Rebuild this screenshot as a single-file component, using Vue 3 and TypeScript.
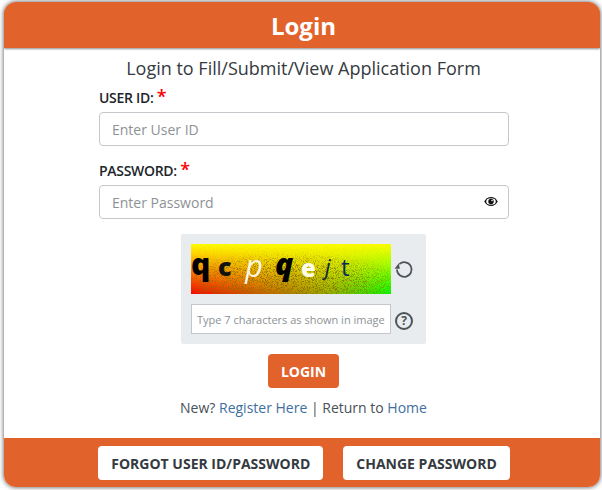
<script setup lang="ts">
const captchaChars = [
  { ch: 'q', cls: 'c1' },
  { ch: 'c', cls: 'c2' },
  { ch: 'p', cls: 'c3' },
  { ch: 'q', cls: 'c4' },
  { ch: 'e', cls: 'c5' },
  { ch: 'j', cls: 'c6' },
  { ch: 't', cls: 'c7' },
]
</script>

<template>
  <div class="page">
    <div class="card">
      <div class="card-head">Login</div>

      <form class="card-body" @submit.prevent>
        <p class="intro">Login to Fill/Submit/View Application Form</p>

        <div class="fields">
          <label class="label">USER ID: <span class="req">*</span></label>
          <input class="control" type="text" placeholder="Enter User ID" />

          <label class="label label-pass">PASSWORD: <span class="req">*</span></label>
          <div class="pass-wrap">
            <input class="control" type="password" placeholder="Enter Password" />
            <svg class="eye" viewBox="0 0 16 12" width="14" height="11">
              <path d="M8 .8C4.6.8 1.8 3 .3 6c1.5 3 4.3 5.200 7.700 5.200S14.200 9 15.700 6C14.200 3 11.400.8 8 .8z" fill="#111" />
              <ellipse cx="8" cy="6" rx="5.400" ry="3.700" fill="#fff" />
              <circle cx="8" cy="6" r="3.100" fill="#111" />
              <circle cx="9.200" cy="4.800" r="0.900" fill="#fff" />
            </svg>
          </div>
        </div>

        <div class="captcha">
          <div class="captcha-row">
            <div class="captcha-img">
              <svg class="noise" width="200" height="50">
                <defs>
                  <filter id="speckle" x="0" y="0" width="100%" height="100%">
                    <feTurbulence type="fractalNoise" baseFrequency="1.1" numOctaves="2" seed="4" />
                    <feColorMatrix type="matrix" values="0 0 0 0 0.250  0 0 0 0 0.150  0 0 0 0 0  3.500 3.500 0 0 -3.400" />
                  </filter>
                  <radialGradient id="centre" cx="0.47" cy="0.8" r="0.65">
                    <stop offset="0" stop-color="#fff" />
                    <stop offset="0.6" stop-color="#bbb" />
                    <stop offset="1" stop-color="#111" />
                  </radialGradient>
                  <mask id="fadeMask">
                    <rect width="200" height="50" fill="url(#centre)" />
                  </mask>
                </defs>
                <g mask="url(#fadeMask)">
                  <rect width="200" height="50" filter="url(#speckle)" />
                </g>
              </svg>
              <span v-for="(c, i) in captchaChars" :key="i" class="glyph" :class="c.cls">{{ c.ch }}</span>
            </div>
            <svg class="side-icon" viewBox="0 0 20 20" width="20" height="20">
              <path d="M5.300 5.200A7.300 7.300 0 1 1 3 10.500" fill="none" stroke="#4d5358" stroke-width="1.700" />
              <path d="M.6 9.800 L5.800 9.800 L4.800 4.200z" fill="#4d5358" />
            </svg>
          </div>
          <div class="captcha-row captcha-row-input">
            <input class="captcha-input" type="text" placeholder="Type 7 characters as shown in image" />
            <span class="help">?</span>
          </div>
        </div>

        <button class="login-btn" type="submit">LOGIN</button>

        <p class="links">New? <a href="#">Register Here</a> | Return to <a href="#">Home</a></p>
      </form>

      <div class="card-foot">
        <button class="foot-btn" type="button">FORGOT USER ID/PASSWORD</button>
        <button class="foot-btn" type="button">CHANGE PASSWORD</button>
      </div>
    </div>
  </div>
</template>

<style>
html,
body {
  margin: 0;
  background: #fff;
}
</style>

<style scoped>
.page {
  width: 602px;
  height: 490px;
  box-sizing: border-box;
  padding: 2px 2px 3px 4px;
  overflow: hidden;
  font-family: "Open Sans", sans-serif;
}

.card {
  height: 100%;
  display: flex;
  flex-direction: column;
  background: #fff;
  border-radius: 12px;
  box-shadow: 0 0 5px rgba(0, 0, 0, 0.7);
  overflow: hidden;
}

.card-head {
  height: 46px;
  flex: none;
  box-sizing: border-box;
  padding-left: 3px;
  display: flex;
  align-items: center;
  justify-content: center;
  background: #e2622c;
  color: #fff;
  font-size: 24px;
  font-weight: 700;
  box-shadow: 0 1px 2px rgba(0, 0, 0, 0.45);
}

.card-body {
  flex: 1;
  display: flex;
  flex-direction: column;
  align-items: center;
  min-height: 0;
}

.intro {
  margin: 8px 0 0 3px;
  font-size: 18px;
  line-height: 24px;
  color: #343a40;
}

.fields {
  width: 410px;
  margin-top: 6px;
  margin-left: 4px;
  display: flex;
  flex-direction: column;
}

.label {
  font-size: 14px;
  font-weight: 600;
  line-height: 24px;
  letter-spacing: -0.3px;
  color: #212529;
  margin-bottom: 2px;
}

.label-pass {
  margin-top: 13px;
}

.req {
  color: #f00;
  font-size: 18px;
  line-height: 14px;
}

.control {
  width: 100%;
  height: 34px;
  box-sizing: border-box;
  display: block;
  padding: 0 12px;
  border: 1px solid #c4c8cc;
  border-radius: 4px;
  font-family: inherit;
  font-size: 14px;
  color: #495057;
  background: #fff;
  outline: none;
}

.control::placeholder,
.captcha-input::placeholder {
  color: #8d9296;
  opacity: 1;
}

.pass-wrap {
  position: relative;
}

.eye {
  position: absolute;
  top: 11px;
  right: 11px;
}

.captcha {
  width: 245px;
  height: 110px;
  box-sizing: border-box;
  margin-top: 15px;
  margin-left: 3px;
  padding: 10px;
  background: #e9ecef;
  border-radius: 2px;
  display: flex;
  flex-direction: column;
  gap: 10px;
}

.captcha-row {
  display: flex;
  align-items: center;
  gap: 3px;
}

.captcha-row-input {
  gap: 4px;
}

.captcha-img {
  position: relative;
  width: 200px;
  height: 50px;
  flex: none;
  overflow: hidden;
  background:
    linear-gradient(to bottom, #ff0 0%, rgba(255, 255, 0, 0.6) 45%, rgba(255, 255, 0, 0) 100%),
    linear-gradient(to right, #f00 0%, #d06000 35%, #90b000 70%, #0f0 100%);
}

.noise {
  position: absolute;
  inset: 0;
}

.glyph {
  position: absolute;
  line-height: 0.8;
  font-family: "Open Sans", sans-serif;
}

.c1 { left: 0; top: 8px; font-size: 30px; font-weight: 800; color: #000; }
.c2 { left: 27px; top: 12px; font-size: 25px; font-weight: 800; color: #111; }
.c3 { left: 54px; top: 9px; font-size: 31px; font-weight: 400; font-style: italic; color: #fff; opacity: 0.9; }
.c4 { left: 84px; top: 8px; font-size: 30px; font-weight: 800; font-style: italic; color: #000; }
.c5 { left: 110px; top: 14px; font-size: 24px; font-weight: 800; color: #fdfde8; }
.c6 { left: 134px; top: 14px; font-size: 22px; font-style: italic; color: #0a2a3a; }
.c7 { left: 150px; top: 13px; font-size: 24px; color: #0b2c5a; }

.side-icon {
  flex: none;
}

.captcha-input {
  width: 200px;
  height: 30px;
  box-sizing: border-box;
  flex: none;
  padding: 0 0 0 5px;
  border: 1px solid #c4c8cc;
  background: #fff;
  font-family: inherit;
  font-size: 11px;
  outline: none;
}

.help {
  width: 14px;
  height: 14px;
  flex: none;
  margin-top: 3px;
  border: 2px solid #4d5358;
  border-radius: 50%;
  display: flex;
  align-items: center;
  justify-content: center;
  font-size: 12px;
  font-weight: 700;
  color: #4d5358;
}

.login-btn {
  width: 71px;
  height: 34px;
  margin-top: 10px;
  margin-left: 3px;
  padding: 0;
  border: 0;
  border-radius: 4px;
  background: #e2622c;
  color: #fff;
  font-family: inherit;
  font-size: 14px;
  font-weight: 700;
}

.links {
  margin: 10px 0 0 3px;
  font-size: 14px;
  line-height: 20px;
  color: #495057;
}

.links a {
  color: #3e6f9e;
  text-decoration: none;
}

.card-foot {
  height: 49px;
  flex: none;
  box-sizing: border-box;
  padding-top: 8px;
  padding-left: 4px;
  display: flex;
  justify-content: center;
  align-items: flex-start;
  gap: 20px;
  background: #e2622c;
}

.foot-btn {
  height: 34px;
  padding: 0 13px;
  border: 0;
  border-radius: 4px;
  background: #fff;
  color: #343a40;
  font-family: inherit;
  font-size: 14px;
  font-weight: 700;
}
</style>
